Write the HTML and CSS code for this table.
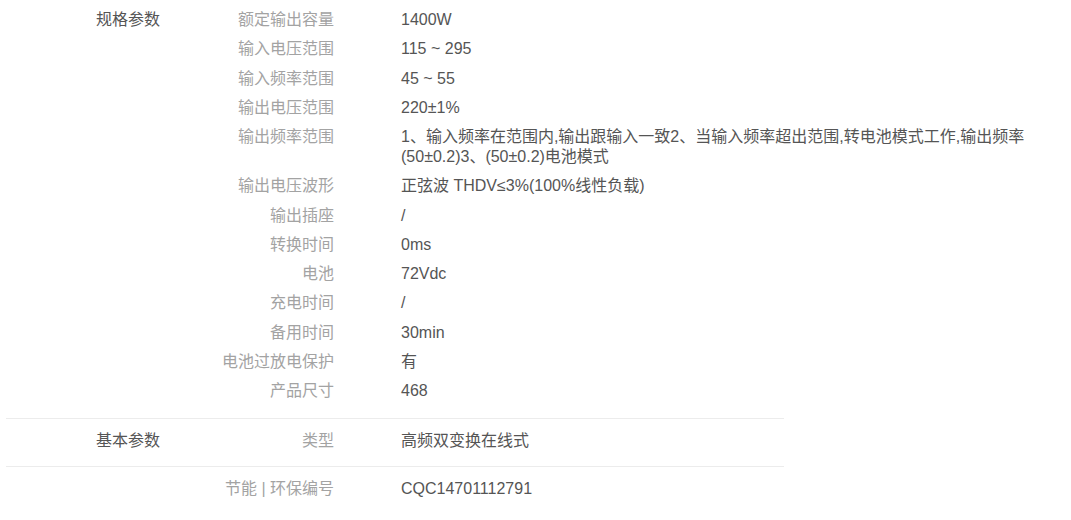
FILE: index.html
```html
<!DOCTYPE html>
<html lang="zh-CN">
<head>
    <meta charset="UTF-8">
    <meta name="viewport" content="width=device-width, initial-scale=1.0">
    <title>规格参数</title>
    <link rel="stylesheet" href="styles.css">
</head>
<body>
    <div class="specs">
        <div class="group">
            <div class="group-name">规格参数</div>
            <dl class="params">
                <div class="param"><dt>额定输出容量</dt><dd>1400W</dd></div>
                <div class="param"><dt>输入电压范围</dt><dd>115 ~ 295</dd></div>
                <div class="param"><dt>输入频率范围</dt><dd>45 ~ 55</dd></div>
                <div class="param"><dt>输出电压范围</dt><dd>220±1%</dd></div>
                <div class="param"><dt>输出频率范围</dt><dd>1、输入频率在范围内,输出跟输入一致2、当输入频率超出范围,转电池模式工作,输出频率(50±0.2)3、(50±0.2)电池模式</dd></div>
                <div class="param"><dt>输出电压波形</dt><dd>正弦波 THDV≤3%(100%线性负载)</dd></div>
                <div class="param"><dt>输出插座</dt><dd>/</dd></div>
                <div class="param"><dt>转换时间</dt><dd>0ms</dd></div>
                <div class="param"><dt>电池</dt><dd>72Vdc</dd></div>
                <div class="param"><dt>充电时间</dt><dd>/</dd></div>
                <div class="param"><dt>备用时间</dt><dd>30min</dd></div>
                <div class="param"><dt>电池过放电保护</dt><dd>有</dd></div>
                <div class="param"><dt>产品尺寸</dt><dd>468</dd></div>
            </dl>
        </div>
        <div class="group">
            <div class="group-name">基本参数</div>
            <dl class="params">
                <div class="param"><dt>类型</dt><dd>高频双变换在线式</dd></div>
            </dl>
        </div>
        <div class="group">
            <div class="group-name"></div>
            <dl class="params">
                <div class="param"><dt>节能 | 环保编号</dt><dd>CQC14701112791</dd></div>
            </dl>
        </div>
    </div>
</body>
</html>
```

FILE: styles.css
```css
body {
    margin: 0;
    padding: 0;
    background: #fff;
    font-family: "Liberation Sans", Arial, "Noto Sans CJK SC", sans-serif;
    font-size: 16px;
    line-height: 20px;
}
.specs {
    width: 778px;
    margin-left: 6px;
}
.group {
    display: flex;
    padding: 12px 0 15px;
    border-bottom: 1px solid #ececec;
}
.group:first-child {
    padding: 10px 0 17px;
}
.group:last-child {
    border-bottom: none;
}
.group-name {
    width: 100px;
    padding-left: 90px;
    flex-shrink: 0;
    color: #555;
}
.params {
    margin: 0;
    display: flex;
    flex-direction: column;
    gap: 9.25px;
}
.param {
    display: flex;
}
.param dt {
    width: 138px;
    flex-shrink: 0;
    text-align: right;
    color: #a3a3a3;
}
.param dd {
    width: 640px;
    flex-shrink: 0;
    margin: 0 0 0 67px;
    color: #555;
}
```
